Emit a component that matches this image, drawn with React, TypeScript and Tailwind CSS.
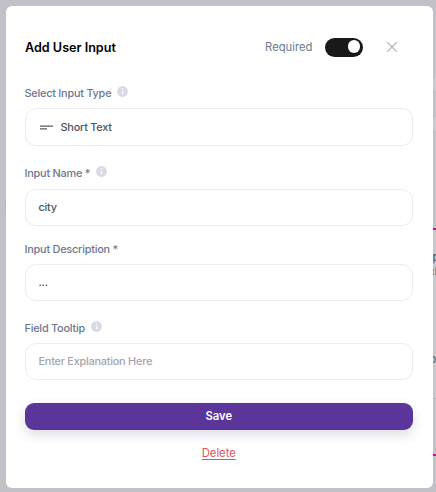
import type { ReactNode } from 'react';

function InfoIcon() {
  return (
    <svg width="11" height="11" viewBox="0 0 11 11" className="mb-[2px]">
      <circle cx="5.5" cy="5.5" r="5.4" fill="#d9dae6" />
      <circle cx="5.5" cy="3" r="0.8" fill="#fff" />
      <path d="M5.5 4.8v3.4" stroke="#fff" strokeWidth="1.2" />
    </svg>
  );
}

function FieldLabel({ text, info }: { text: string; info?: boolean }) {
  return (
    <div className="flex h-4 items-center gap-[6px] pb-px text-[10.9px] leading-4 font-medium tracking-[-0.23px] text-[#6d7890]">
      <span>{text}</span>
      {info && <InfoIcon />}
    </div>
  );
}

function FieldBox({ children }: { children: ReactNode }) {
  return (
    <div className="flex h-[37px] items-center rounded-[11px] border border-[#ececee] px-[13px] pb-px text-[10.9px] font-medium tracking-[-0.23px] text-[#4f5362]">
      {children}
    </div>
  );
}

export default function App() {
  return (
    <main className="flex h-[492px] w-[436px] overflow-hidden bg-[#c1c1c7] font-['Inter',sans-serif]">
      {/* Left edge of the page behind the dialog */}
      <div className="flex w-[6px] shrink-0 justify-end pt-[199px]">
        <div className="h-4 w-px bg-[#b4b4bb]" />
      </div>

      <section className="mt-[5.5px] flex h-[482px] w-[426.5px] shrink-0 flex-col rounded-[6px] bg-white pt-[31.5px] pr-[19.5px] pl-[18.5px]">
        <header className="flex h-5 items-center pl-[0.5px]">
          <h1 className="pt-[2px] text-[12.6px] font-semibold text-black">Add User Input</h1>
          <div className="ml-auto flex items-center">
            <span className="text-[11.25px] text-[#6d7890]">Required</span>
            <button
              type="button"
              aria-label="Required"
              className="ml-3 flex h-[19px] w-[38.5px] items-center justify-end rounded-full bg-[#191919] pr-[3px] pb-px"
            >
              <span className="size-[12.5px] rounded-full bg-white" />
            </button>
            <button type="button" aria-label="Close" className="mr-4 ml-6">
              <svg width="10" height="10" viewBox="0 0 10 10" stroke="#aeaeb1" strokeWidth="1.2">
                <path d="M0.3 0.3l9.4 9.4M9.7 0.3L0.3 9.7" />
              </svg>
            </button>
          </div>
        </header>

        <div className="flex flex-col gap-[7px] pt-7">
          <FieldLabel text="Select Input Type" info />
          <div className="flex h-[38px] items-center gap-2 rounded-[11px] border border-[#ececee] px-[14px] text-[10.9px] font-medium tracking-[-0.23px] text-[#4f5362]">
            <svg width="13" height="5" viewBox="0 0 13 5" stroke="#5b5e70" strokeWidth="1.2">
              <path d="M0 1.1h13M0 3.9h7" />
            </svg>
            <span>Short Text</span>
          </div>
        </div>

        <div className="flex flex-col gap-2 pt-[19px]">
          <FieldLabel text="Input Name *" info />
          <FieldBox>city</FieldBox>
        </div>

        <div className="flex flex-col gap-[7px] pt-[15px]">
          <FieldLabel text="Input Description *" />
          <FieldBox>...</FieldBox>
        </div>

        <div className="flex flex-col gap-[7px] pt-[19px]">
          <FieldLabel text="Field Tooltip" info />
          <FieldBox>
            <span className="text-[#a3a5ae]">Enter Explanation Here</span>
          </FieldBox>
        </div>

        <button
          type="button"
          className="mt-[23px] flex h-[27px] w-full shrink-0 items-center justify-center rounded-[9px] bg-[#5b3599] text-[11.25px] font-semibold text-white shadow-[0_5px_12px_rgba(50,60,90,0.17)]"
        >
          Save
        </button>
        <button
          type="button"
          className="mt-[14px] self-center text-[11.25px] leading-[18px] text-[#d95357] underline underline-offset-2"
        >
          Delete
        </button>
      </section>

      {/* Right edge of the page behind the dialog */}
      <aside className="flex w-[3.5px] shrink-0 flex-col overflow-hidden pt-[78px] text-[11px] leading-[14px] text-[#4b5060]">
        <div className="h-[13px] bg-[#c9c9cf]" />
        <div className="mt-[26px] h-[14px] bg-[#c9c9cf]" />
        <div className="mt-[97px] h-[171px] border-t-2 border-b border-t-[#c4188c] border-b-[#b4b4bd] bg-[#c7c7cd] pt-5">
          <p>p</p>
          <p className="-ml-px">:l</p>
          <p className="-ml-[3px] pt-[74px]">o</p>
        </div>
        <div className="h-[57px] border-b-2 border-[#c4188c]" />
      </aside>
    </main>
  );
}
